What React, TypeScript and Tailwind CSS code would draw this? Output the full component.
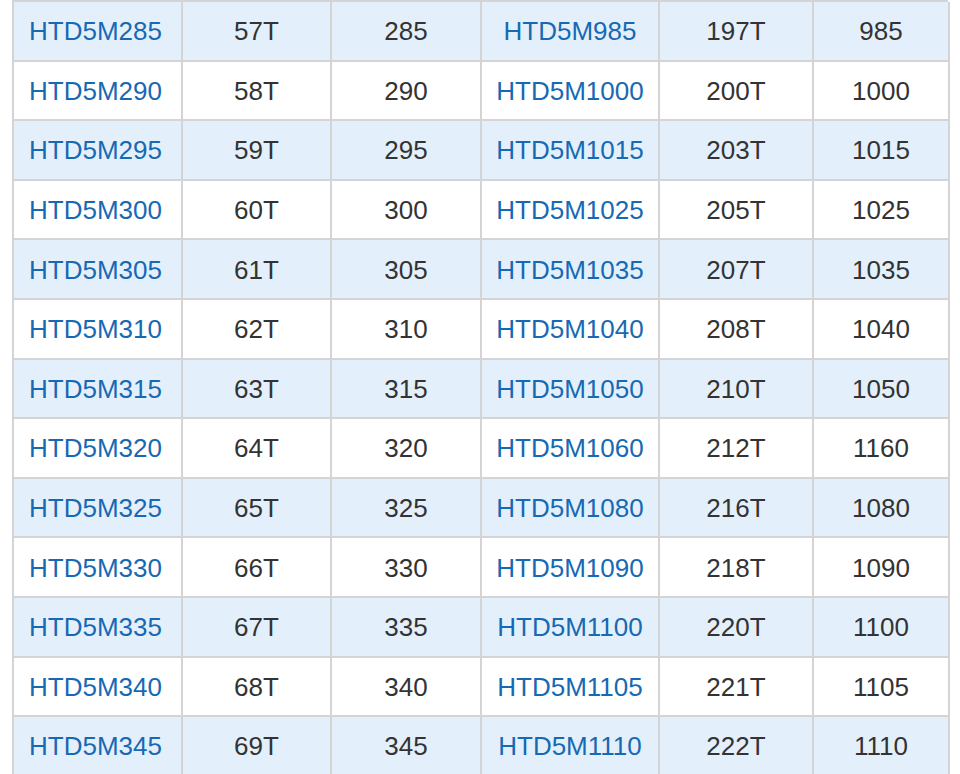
import React from 'react'

const rows: [string, string, string, string, string, string][] = [
    ["HTD5M285", "57T", "285", "HTD5M985", "197T", "985"],
    ["HTD5M290", "58T", "290", "HTD5M1000", "200T", "1000"],
    ["HTD5M295", "59T", "295", "HTD5M1015", "203T", "1015"],
    ["HTD5M300", "60T", "300", "HTD5M1025", "205T", "1025"],
    ["HTD5M305", "61T", "305", "HTD5M1035", "207T", "1035"],
    ["HTD5M310", "62T", "310", "HTD5M1040", "208T", "1040"],
    ["HTD5M315", "63T", "315", "HTD5M1050", "210T", "1050"],
    ["HTD5M320", "64T", "320", "HTD5M1060", "212T", "1160"],
    ["HTD5M325", "65T", "325", "HTD5M1080", "216T", "1080"],
    ["HTD5M330", "66T", "330", "HTD5M1090", "218T", "1090"],
    ["HTD5M335", "67T", "335", "HTD5M1100", "220T", "1100"],
    ["HTD5M340", "68T", "340", "HTD5M1105", "221T", "1105"],
    ["HTD5M345", "69T", "345", "HTD5M1110", "222T", "1110"],
]

const App = () => {
    return <div className="bg-white min-h-screen pl-[12px] font-['Liberation_Sans',Arial,sans-serif] text-[26px]">
        <div className="w-[936px] grid grid-cols-[169px_149px_150px_178px_154px_136px] border-l-2 border-t-2 border-[#d4d4d4]">
            {rows.map((row, i) => row.map((cell, j) => (
                <div
                    key={i + "-" + j}
                    className={
                        "h-[59.6px] flex items-center justify-center pt-[2px] border-r-2 border-b-2 border-[#d4d4d4] " +
                        (j === 0 ? "pr-[4px] " : "") +
                        (i % 2 === 0 ? "bg-[#e3f0fc] " : "bg-white ") +
                        (j === 0 || j === 3 ? "text-[#1769b3]" : "text-[#333333]")
                    }
                >
                    {cell}
                </div>
            )))}
        </div>
    </div>
}

export default App
